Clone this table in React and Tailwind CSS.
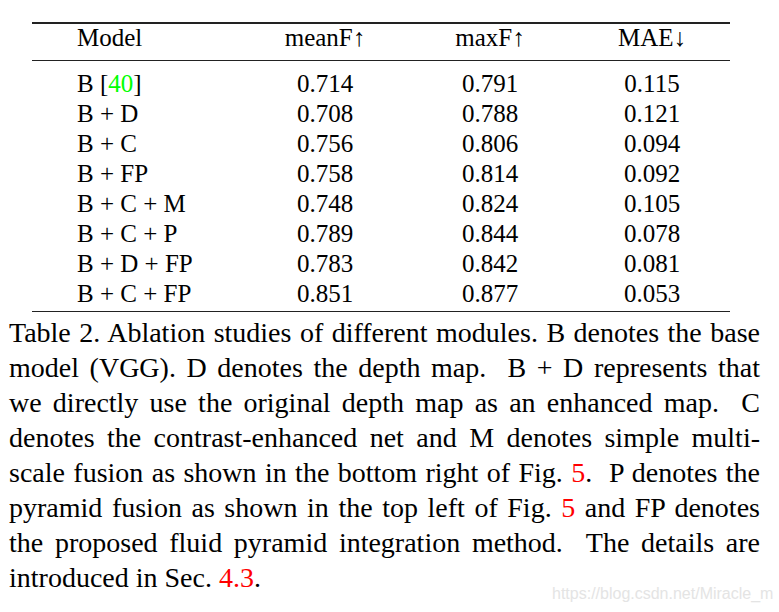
import React from 'react';

const rows = [
  { model: <>B [<span className="text-[#00ff00]">40</span>]</>, meanF: '0.714', maxF: '0.791', mae: '0.115' },
  { model: 'B + D', meanF: '0.708', maxF: '0.788', mae: '0.121' },
  { model: 'B + C', meanF: '0.756', maxF: '0.806', mae: '0.094' },
  { model: 'B + FP', meanF: '0.758', maxF: '0.814', mae: '0.092' },
  { model: 'B + C + M', meanF: '0.748', maxF: '0.824', mae: '0.105' },
  { model: 'B + C + P', meanF: '0.789', maxF: '0.844', mae: '0.078' },
  { model: 'B + D + FP', meanF: '0.783', maxF: '0.842', mae: '0.081' },
  { model: 'B + C + FP', meanF: '0.851', maxF: '0.877', mae: '0.053' },
];

const Red = ({ children }) => <span className="text-[#ff0000]">{children}</span>;

// each caption line is its own justified block so the breaks match the paper
const captionLines = [
  <>Table 2. Ablation studies of different modules. B denotes the base</>,
  <>model (VGG). D denotes the depth map.&nbsp; B + D represents that</>,
  <>we directly use the original depth map as an enhanced map.&nbsp; C</>,
  <>denotes the contrast-enhanced net and M denotes simple multi-</>,
  <>scale fusion as shown in the bottom right of Fig. <Red>5</Red>.&nbsp; P denotes the</>,
  <>pyramid fusion as shown in the top left of Fig. <Red>5</Red> and FP denotes</>,
  <>the proposed fluid pyramid integration method.&nbsp; The details are</>,
];

const Rule = ({ className = '' }) => <div className={`h-[1.5px] bg-[#222] ${className}`} />;

export default function App() {
  return (
    <div className="relative w-[779px] h-[612px] bg-white text-black overflow-hidden font-['Liberation_Serif','Times_New_Roman',serif]">
      <div className="pt-[22px] ml-[32px] w-[698px]">
        <Rule />
        {/* Header */}
        <div className="grid grid-cols-[212px_162px_168px_156px] text-[25px] leading-[27px]">
          <div className="pl-[45px]">Model</div>
          <div className="text-center">meanF↑</div>
          <div className="text-center">maxF↑</div>
          <div className="text-center">MAE↓</div>
        </div>
        <Rule className="mt-[9px]" />

        {/* Body */}
        <div className="mt-[7.5px]">
          {rows.map((r, i) => (
            <div key={i} className="grid grid-cols-[212px_162px_168px_156px] text-[25px] leading-[30px]">
              <div className="pl-[45px] whitespace-nowrap">{r.model}</div>
              <div className="text-center">{r.meanF}</div>
              <div className="text-center">{r.maxF}</div>
              <div className="text-center">{r.mae}</div>
            </div>
          ))}
        </div>
        <Rule className="mt-[2px]" />
      </div>

      {/* Caption */}
      <div className="mt-[3px] ml-[9px] w-[751px] text-[28px] leading-[35px]">
        {captionLines.map((line, i) => (
          <div key={i} className="text-justify [text-align-last:justify] whitespace-nowrap">{line}</div>
        ))}
        <div>introduced in Sec. <Red>4.3</Red>.</div>
      </div>

      {/* CSDN watermark */}
      <div className="absolute left-[552px] top-[584px] text-[16px] leading-[20px] text-[#e4e4e4] font-['Liberation_Sans',Arial,sans-serif]">
        https://blog.csdn.net/Miracle_m
      </div>
    </div>
  );
}
